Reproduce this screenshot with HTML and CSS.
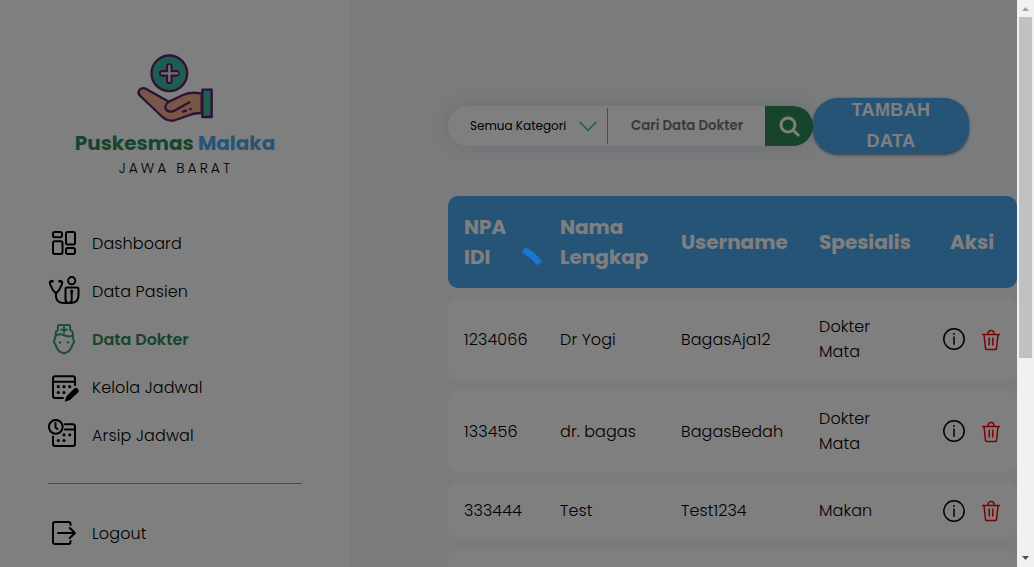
FILE: index.html
```html
<!DOCTYPE html>
<html lang="id">
<head>
<meta charset="utf-8">
<title>Puskesmas Malaka - Data Dokter</title>
<link rel="stylesheet" href="styles.css">
</head>
<body>
<svg class="defs" width="0" height="0">
  <symbol id="info" viewBox="0 0 24 24"><g fill="none" stroke="#000" stroke-width="1.5"><circle cx="12" cy="12" r="10.2"/><path d="M12 9.6v8.2M12 6v1.8"/></g></symbol>
  <symbol id="trash" viewBox="0 0 20 22"><g fill="none" stroke="#f5060c" stroke-width="1.5"><path d="M1 5.500h18M3 5.500l1.500 14q.2 1 1.200 1h8.600q1 0 1.200-1L17 5.500M7 5q0-3.400 3-3.400T13 5M8.200 8.500v8M11.800 8.500v8"/></g></symbol>
</svg>
<div class="app">
  <aside class="sidebar">
    <div class="brand">
      <svg class="logo" viewBox="228 38 234 210">
        <g stroke="#5b2468" stroke-width="7" stroke-linejoin="round" stroke-linecap="round">
          <circle cx="328" cy="99" r="53.500" fill="#3fb8a2"/>
          <path d="M328 79v42M307 99h42" stroke-width="20"/>
          <path d="M328 77v45M306 99h45" stroke="#e9deee" stroke-width="7"/>
          <path d="M425 160q-32-7-56 4l-42 20-70-39q-13-5-20 5-4 10 4 17l63 60q17 17 38 13 12-3 38-13 24-10 45-9z" fill="#f0ae90"/>
          <path d="M388 186l-42 24q-14 8-26 0-10-11 5-25M369 214l9-3M391 206h1" fill="none"/>
          <path d="M427 148h28v82h-28z" fill="#3fb8a2"/>
        </g>
      </svg>
      <h1 class="name">Puskesmas <span>Malaka</span></h1>
      <p class="region">JAWA BARAT</p>
    </div>
    <nav class="menu">
      <a class="item"><svg viewBox="0 0 32 32"><rect x="5" y="5" width="9" height="5.3" rx="1.7"/><rect x="5" y="14.3" width="9.5" height="12.7" rx="1.7"/><rect x="18" y="5" width="9" height="12.5" rx="1.7"/><rect x="18" y="21" width="9" height="6" rx="1.7"/></svg><span>Dashboard</span></a>
      <a class="item"><svg viewBox="0 0 32 32"><circle cx="23.7" cy="5.7" r="3.6"/><path d="M4.5 6H3.3Q1.3 6.500 2 9q2 6 6 9.500 4-3.500 6-9.500.7-2.500-1.300-3H11.500M8 18.500v3q.5 6.500 8 6.500h7q7.500-.5 7.500-7.500V14q0-1.500-1.500-1.500H19q-1.500 0-1.500 1.500v11q.5 3 3.500 3 2.700-.5 2.700-3.500V16"/><path d="M23.700 17v-1M4.200 6.200h.01M11.800 6.200h.01" stroke-width="3"/></svg><span>Data Pasien</span></a>
      <a class="item active"><svg viewBox="0 0 32 32"><path d="M7.500 13.500 8 8.500 10 7 9.700 3.500Q10 2 11.500 2h9Q22 2 22.300 3.500L22 7l2.500 1.500.5 5M7.500 13l-1 4Q5 19.500 7.500 21.500 9 28.500 16 30.500q7-2 8.500-9 2.500-2 1-4.500l-1-4M8.500 12.500Q12 10.500 15.500 12q6 2.500 9 .5M16 4v5.500M13.200 6.700h5.600"/><path d="M12 19.300v.4M20 19.300v.4" stroke-width="2.300"/></svg><span>Data Dokter</span></a>
      <a class="item"><svg viewBox="0 0 32 32"><path d="M15 27H7q-2 0-2-2V7.500Q5 5.300 7 5.300H25Q27 5.300 27 7.500V14M5 10.700H27"/><path d="M10.300 15.700h.01M16 15.700h.01M21.700 15.700h.01M10.300 21.500h.01M16 21.500h.01" stroke-width="3.200"/><path d="M16.700 30.700 18.300 25.500 26 17.800Q27.500 15.800 29.500 17.500 31.500 19.500 30 21.500L22 29z" class="solid"/></svg><span>Kelola Jadwal</span></a>
      <a class="item"><svg viewBox="0 0 32 32"><circle cx="7.800" cy="7.800" r="6.900"/><path d="M7.500 4v4.500l2 1.500M17 5.300H25Q27 5.300 27 7.500V25Q27 27 25 27H7Q5 27 5 25V17.500M17 10.500H27"/><path d="M16 15.800h.01M21.700 15.800h.01M10.300 21.500h.01M16 21.500h.01" stroke-width="3.200"/></svg><span>Arsip Jadwal</span></a>
      <hr class="rule">
      <a class="item"><svg viewBox="0 0 32 32"><path d="M22.500 8V7Q22.500 5 20.500 5H7Q5 5 5 7V25Q5 27 7 27H20.500Q22.500 27 22.500 25V24M10 16H27M21.800 11 27 16l-5.200 5"/></svg><span>Logout</span></a>
    </nav>
  </aside>
  <main class="content">
    <div class="toolbar">
      <div class="search">
        <span class="category">Semua Kategori</span>
        <svg class="chevron" viewBox="0 0 18 11"><path d="M.7.8 9 9.500 17.300.8"/></svg>
        <span class="query">Cari Data Dokter</span>
        <span class="submit"><svg viewBox="0 0 22 22"><circle cx="9" cy="9" r="7"/><path d="M14 14l6 6"/></svg></span>
      </div>
      <button class="add">TAMBAH DATA</button>
    </div>
    <div class="table">
      <div class="row head"><span>NPA<br>IDI</span><span>Nama<br>Lengkap</span><span>Username</span><span>Spesialis</span><span class="aksi">Aksi</span></div>
      <div class="row"><span>1234066</span><span>Dr Yogi</span><span>BagasAja12</span><span>Dokter<br>Mata</span><span class="actions"><svg class="i-info"><use href="#info"/></svg><svg class="i-trash"><use href="#trash"/></svg></span></div>
      <div class="row"><span>133456</span><span>dr. bagas</span><span>BagasBedah</span><span>Dokter<br>Mata</span><span class="actions"><svg class="i-info"><use href="#info"/></svg><svg class="i-trash"><use href="#trash"/></svg></span></div>
      <div class="row short"><span>333444</span><span>Test</span><span>Test1234</span><span>Makan</span><span class="actions"><svg class="i-info"><use href="#info"/></svg><svg class="i-trash"><use href="#trash"/></svg></span></div>
      <div class="row short"></div>
    </div>
  </main>
  <div class="scrollbar">
    <svg class="arrow up" viewBox="0 0 7 4"><path d="M0 4 3.500 0 7 4z"/></svg>
    <div class="thumb"></div>
    <svg class="arrow down" viewBox="0 0 7 4"><path d="M0 0h7L3.500 4z"/></svg>
  </div>
</div>
<div class="backdrop">
  <svg class="spinner" viewBox="-40 -40 80 80"><path d="M14.200-33.900A36.700 36.700 0 0 1 30.400-20.500"/></svg>
</div>
</body>
</html>
```
FILE: styles.css
```css
* { box-sizing: border-box; }
body {
  margin: 0;
  overflow: hidden;
  font-family: Poppins, Inter, "Open Sans", sans-serif;
  font-size: 16px;
  color: #000;
}
.defs { position: absolute; }
.app { display: flex; width: 1034px; height: 567px; overflow: hidden; background: #f3f6f9; }

.sidebar { width: 350px; flex: none; background: #fff; }
.brand { display: flex; flex-direction: column; align-items: center; padding-top: 53px; height: 219px; }
.logo { width: 78px; height: 70px; }
.name { margin: 5px 0 0; font-size: 20px; line-height: 30px; font-weight: 700; color: #2e8b57; white-space: nowrap; }
.name span { color: #4da8ee; }
.region { margin: 0; font-size: 14px; line-height: 20px; letter-spacing: 3px; padding-left: 2px; font-weight: 300; }
.menu { padding: 0 48px; }
.item { display: flex; align-items: center; gap: 12px; height: 48px; font-weight: 300; letter-spacing: .12px; }
.item svg { width: 32px; height: 32px; flex: none; fill: none; stroke: currentColor; stroke-width: 2; stroke-linecap: round; stroke-linejoin: round; }
.item .solid { fill: currentColor; stroke: none; }
.item.active { color: #2e8b57; font-weight: 600; letter-spacing: 0; }
.item.active svg { color: #3d9c68; }
.rule { height: 1px; width: 254px; margin: 24px 0 25px; border: 0; background: #959595; }

.content { width: 667px; flex: none; padding: 98px 0 0 98px; }
.toolbar { display: flex; align-items: center; height: 56px; }
.search { display: flex; align-items: center; width: 365px; height: 40px; padding-left: 22px; border-radius: 20px; background: #fff; box-shadow: 0 0 20px rgba(40, 50, 80, .13); white-space: nowrap; }
.category { width: 109px; font-size: 12px; }
.chevron { width: 18px; height: 11px; fill: none; stroke: #43b878; stroke-width: 1.400; }
.query { width: 158px; height: 36px; margin-left: 10px; padding-left: 23px; border-left: 1px solid #4da8ee; font-size: 13.333px; line-height: 36px; font-weight: 600; color: #757575; }
.submit { display: flex; align-items: center; justify-content: center; width: 48px; height: 40px; padding: 2px 0 0 2px; border-radius: 0 20px 20px 0; background: #2e8b57; }
.submit svg { width: 22px; height: 22px; fill: none; stroke: #fff; stroke-width: 3; }
.add { width: 156px; height: 56px; padding: 0 30px; border: 0; border-radius: 25px; background: #4da8ee; box-shadow: 0 1px 3px rgba(0, 0, 0, .55); color: #fff; font: 700 18px/31px "Liberation Sans", Arial, sans-serif; letter-spacing: .4px; display: flex; align-items: center; justify-content: center; text-align: center; }

.table { display: flex; flex-direction: column; gap: 10px; margin-top: 42px; }
.row { display: grid; grid-template-columns: 96px 121px 138px 124px 90px; align-items: center; flex: none; height: 82px; border-radius: 10px; background: #fff; font-weight: 300; line-height: 25px; letter-spacing: .08px; white-space: nowrap; }
.row > span { padding-left: 16px; }
.row.short { height: 57px; }
.row.head { height: 92px; background: #4da8ee; color: #fff; font-size: 20px; line-height: 30px; font-weight: 700; letter-spacing: 0; }
.row .aksi { padding: 0; text-align: center; }
.row .actions { display: flex; align-items: center; gap: 15px; padding-left: 15px; }
.i-info { width: 24px; height: 24px; }
.i-trash { width: 20px; height: 22px; margin-top: 1px; }

.scrollbar { position: relative; z-index: 2; display: flex; flex-direction: column; align-items: center; width: 17px; height: 567px; padding: 7px 0; background: #f1f1f1; }
.arrow { width: 7px; height: 4px; fill: #505050; }
.arrow.up { fill: #a3a3a3; }
.arrow.down { margin-top: auto; }
.thumb { width: 13px; height: 341px; margin-top: 6px; background: #c1c1c1; }

.backdrop { position: absolute; z-index: 1; left: 0; top: 0; width: 1017px; height: 567px; display: flex; align-items: center; justify-content: center; background: rgba(0, 0, 0, .5); }
.spinner { width: 80px; height: 80px; fill: none; stroke: #1976d2; stroke-width: 6.500; }
```
